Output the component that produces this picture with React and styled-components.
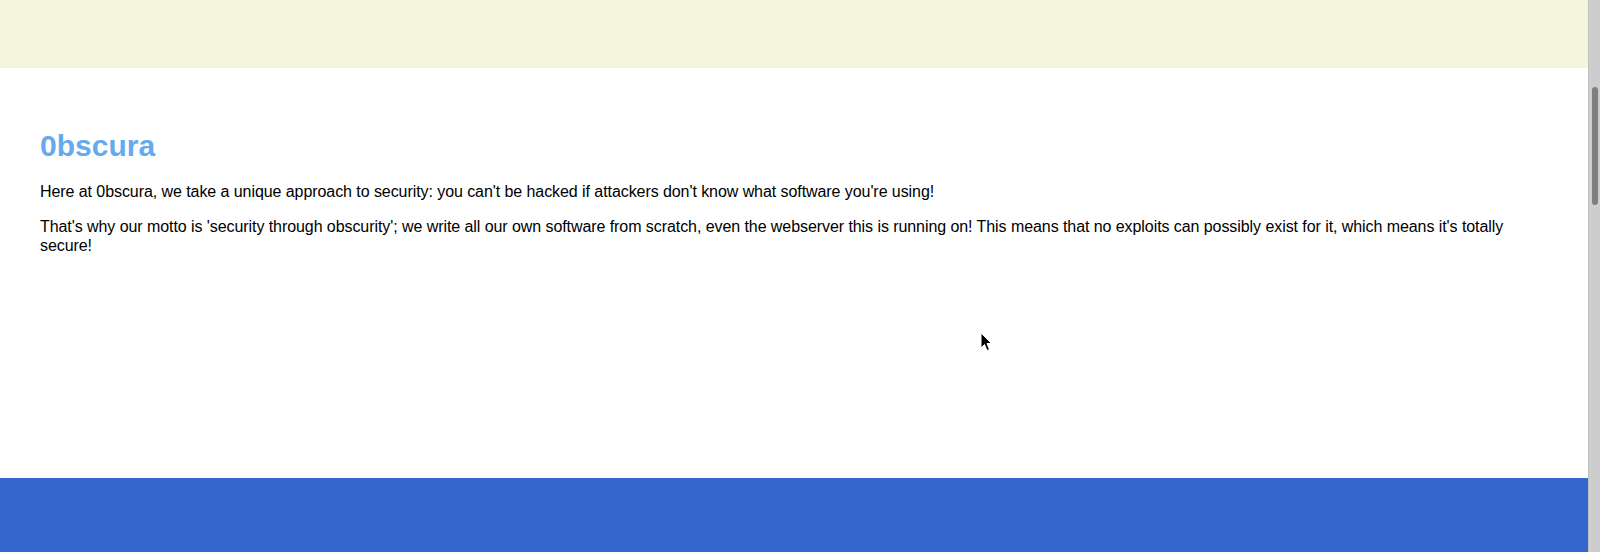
import React, { useLayoutEffect } from 'react';
import styled, { createGlobalStyle } from 'styled-components';

const GlobalStyle = createGlobalStyle`
  html, body {
    margin: 0;
    padding: 0;
  }

  body {
    font-family: "Liberation Sans", Arial, sans-serif;
    color: #000;
    background: #fff;
  }
`;

const Page = styled.div`
  display: flex;
  flex-direction: column;
  margin-right: 12px;
`;

const Banner = styled.header`
  height: 475px;
  background: #f5f5dc;
`;

const Main = styled.main`
  height: 410px;
  box-sizing: border-box;
  padding: 40px;
  background: #fff;
  overflow: hidden;
`;

const Title = styled.h1`
  margin: 21px 0 20px;
  font-size: 30px;
  font-weight: bold;
  color: #66aaee;
`;

const Text = styled.p`
  margin: 17px 0;
  font-size: 16px;
  line-height: 18.4px;
  letter-spacing: -0.07px;
`;

const Footer = styled.footer`
  height: 1697px;
  background: #3366cc;
`;

// the browser's own scrollbar does not show in the shot, so draw it
const ScrollTrack = styled.div`
  position: fixed;
  top: 0;
  right: 0;
  bottom: 0;
  width: 12px;
  box-sizing: border-box;
  display: flex;
  flex-direction: column;
  align-items: center;
  padding-top: 87px;
  background: #cdcdcd;
  border-left: 1px solid #c2c2c2;
`;

const ScrollThumb = styled.div`
  width: 6px;
  height: 118px;
  margin-left: 1px;
  border-radius: 3px;
  background: #7d8082;
`;

const Cursor = styled.svg`
  position: fixed;
  left: 980px;
  top: 332px;
  width: 13px;
  height: 21px;
  pointer-events: none;
`;

const App = () => {
  useLayoutEffect(() => {
    // the shot was taken part way down the page
    window.scrollTo(0, 407);
  }, []);

  return (
    <Page>
      <GlobalStyle />
      <Banner />
      <Main>
        <Title>0bscura</Title>
        <Text>
          Here at 0bscura, we take a unique approach to security: you can't be hacked if attackers don't know what software you're using!
        </Text>
        <Text>
          That's why our motto is 'security through obscurity'; we write all our own software from scratch, even the webserver this is running on! This means that no exploits can possibly exist for it, which means it's totally secure!
        </Text>
      </Main>
      <Footer />
      <ScrollTrack>
        <ScrollThumb />
      </ScrollTrack>
      <Cursor viewBox="0 0 13 21">
        <path
          d="M1 1 L1 16 L4.5 12.5 L7 18.5 L9.5 17.5 L7 11.5 L11.5 11.5 Z"
          fill="#000"
          stroke="#fff"
          strokeWidth="1"
          strokeLinejoin="round"
        />
      </Cursor>
    </Page>
  );
};

export default App;
